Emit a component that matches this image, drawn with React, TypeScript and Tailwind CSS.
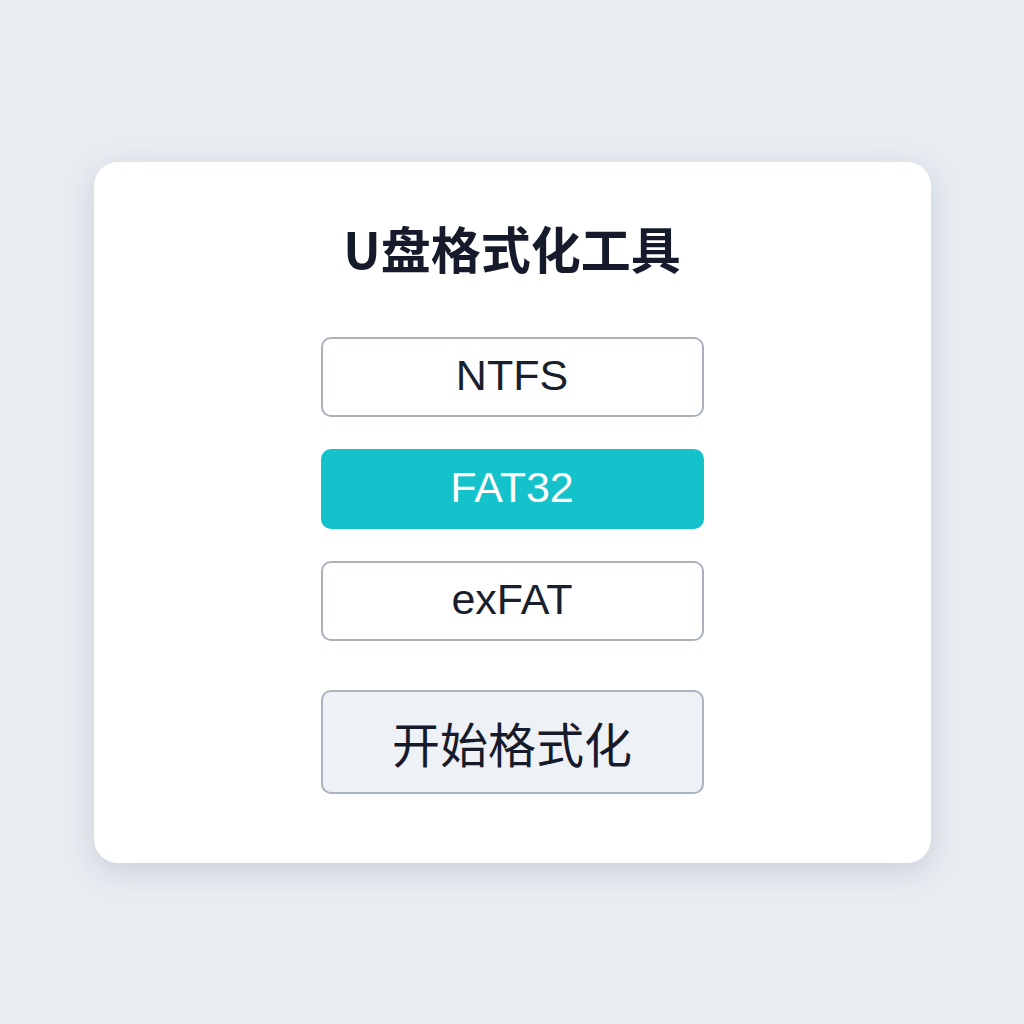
import { useState } from 'react';

const FORMATS = ['NTFS', 'FAT32', 'exFAT'];

const sans = "font-['Liberation_Sans','Noto_Sans_CJK_SC',sans-serif]";
const cjk = "font-['Noto_Sans_CJK_SC',sans-serif]";

export default function App() {
  const [selected, setSelected] = useState('FAT32');

  return (
    <div className="flex h-screen w-full items-center justify-center bg-[#e9ecf1]">
      <div className="flex w-[837px] flex-col items-center rounded-[24px] bg-white pt-[60px] pb-[69px] shadow-[0_8px_28px_rgba(120,135,160,0.28)]">
        <h1 className={`${cjk} text-[50px] font-bold leading-none text-[#161b2c]`}>U盘格式化工具</h1>

        {/* File system options */}
        <div className="mt-[65px] flex w-[383px] flex-col gap-[32px]">
          {FORMATS.map((f) => {
            const active = selected === f;
            return (
              <button
                key={f}
                onClick={() => setSelected(f)}
                className={`${sans} flex h-[80px] items-center justify-center rounded-[10px] pb-[2px] text-[43px] ${
                  active
                    ? 'bg-[#13c2cb] text-white'
                    : 'border-2 border-[#aab1bd] bg-white text-[#1a1f2e]'
                }`}
              >
                {f}
              </button>
            );
          })}
        </div>

        <button
          className={`${cjk} mt-[49px] flex h-[104px] w-[383px] items-center justify-center rounded-[10px] border-2 border-[#aab3c0] bg-[#eef1f5] text-[48px] text-[#161b2c]`}
        >
          开始格式化
        </button>
      </div>
    </div>
  );
}
